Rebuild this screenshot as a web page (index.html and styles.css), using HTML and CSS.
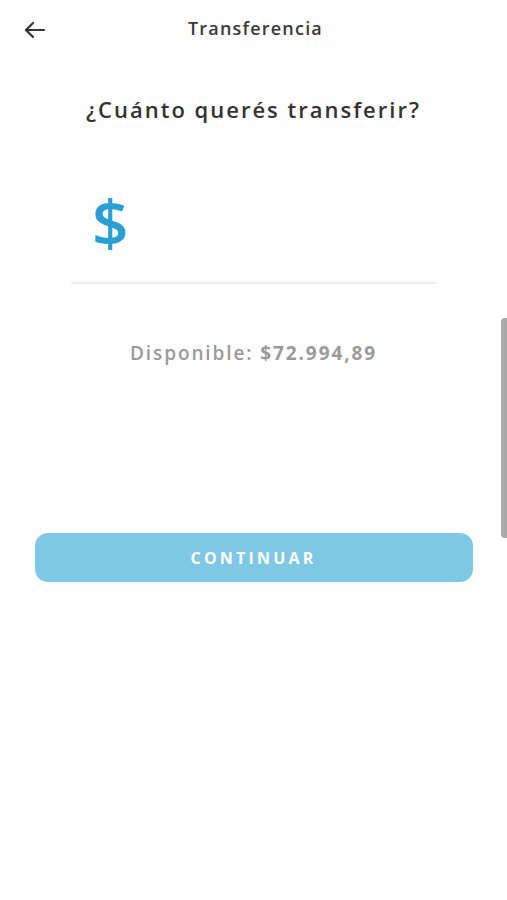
FILE: index.html
```html
<!DOCTYPE html>
<html lang="es">
<head>
  <meta charset="UTF-8">
  <title>Transferencia</title>
  <link rel="stylesheet" href="styles.css">
</head>
<body>
  <header class="barra">
    <button class="volver" aria-label="Volver">
      <svg width="24" height="24" viewBox="0 0 24 24" fill="none" stroke="#333" stroke-width="2.2" stroke-linecap="round" stroke-linejoin="round">
        <path d="M21 12H3"/>
        <path d="M10 5l-7 7 7 7"/>
      </svg>
    </button>
    <span class="titulo">Transferencia</span>
  </header>

  <main class="contenido">
    <h1 class="pregunta">¿Cuánto querés transferir?</h1>

    <div class="monto">
      <span class="signo">$</span>
    </div>

    <p class="disponible">Disponible: <strong>$72.994,89</strong></p>

    <button class="continuar">CONTINUAR</button>
  </main>

  <div class="scroll"></div>
</body>
</html>
```

FILE: styles.css
```css
body {
  margin: 0;
  font-family: "Open Sans", "Noto Sans", sans-serif;
  background-color: #fdfdfd;
  color: #333;
  min-height: 900px;
}

.barra {
  position: relative;
  height: 58px;
  display: flex;
  align-items: center;
  justify-content: center;
}

.volver {
  position: absolute;
  left: 22px;
  top: 18px;
  background: none;
  border: 0;
  padding: 0;
  width: 26px;
  height: 26px;
}

.titulo {
  font-size: 18px;
  font-weight: 600;
  letter-spacing: 1.2px;
  color: #3a3a3a;
  margin-top: -2px;
  padding-left: 4px;
}

.contenido {
  display: flex;
  flex-direction: column;
  align-items: center;
}

.pregunta {
  margin: 36px 0 0;
  font-size: 22px;
  font-weight: 600;
  letter-spacing: 2px;
  color: #333;
  line-height: 30px;
}

.monto {
  width: 365px;
  height: 160px;
  border-bottom: 2px solid #ececec;
  display: flex;
  align-items: flex-end;
  box-sizing: border-box;
  padding: 0 0 28px 21px;
}

.signo {
  font-size: 64px;
  font-weight: 600;
  color: #2a9fd6;
  line-height: 1;
}

.disponible {
  margin: 56px 0 0;
  font-size: 19px;
  font-weight: 600;
  letter-spacing: 1.9px;
  color: #9a9a9a;
  line-height: 26px;
}

.disponible strong {
  font-weight: 700;
}

.continuar {
  margin-top: 167px;
  width: 438px;
  height: 49px;
  border: 0;
  border-radius: 13px;
  background-color: #7ec8e6;
  color: #fff;
  font-family: "Open Sans", "Noto Sans", sans-serif;
  font-size: 16px;
  font-weight: 700;
  letter-spacing: 3.2px;
}

.scroll {
  position: absolute;
  right: 0;
  top: 318px;
  width: 6px;
  height: 220px;
  background-color: #a9a9a9;
  border-radius: 4px 0 0 4px;
}
```
